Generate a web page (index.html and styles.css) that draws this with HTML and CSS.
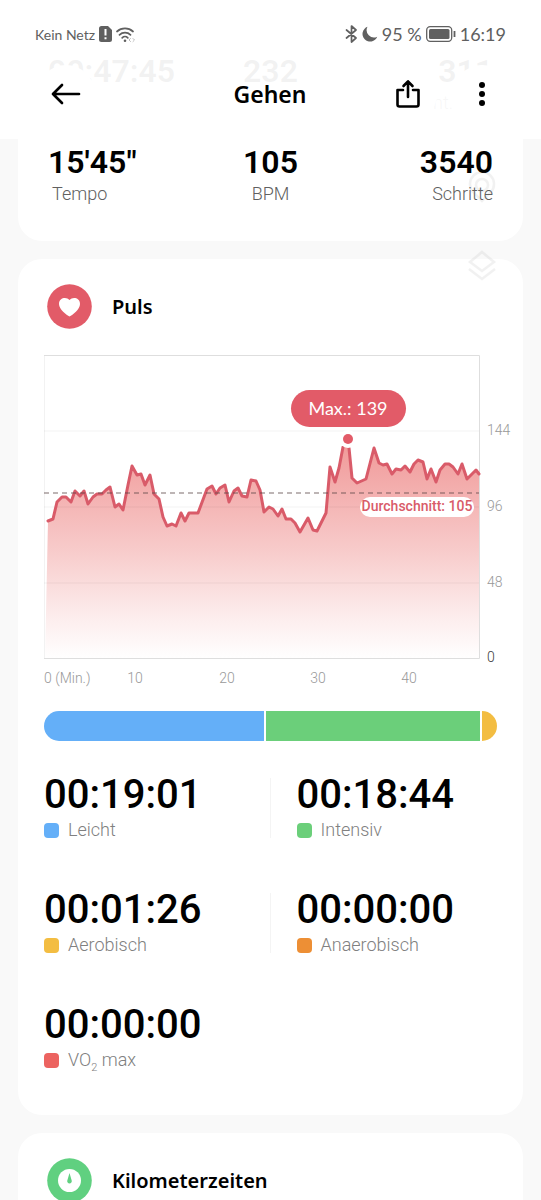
FILE: index.html
```html
<!DOCTYPE html>
<html lang="de">
<head>
<meta charset="utf-8">
<meta name="viewport" content="width=device-width, initial-scale=1">
<title>Gehen</title>
<link rel="stylesheet" href="styles.css">
</head>
<body>
<header class="top">
  <div class="status">
    <div class="status-side status-net">
      <span>Kein Netz</span>
      <svg width="13" height="16" viewBox="0 0 13 16"><path d="M2.500 0H9l4 4v9.500a2.500 2.500 0 0 1-2.500 2.500h-8A2.500 2.500 0 0 1 0 13.500v-11A2.500 2.500 0 0 1 2.500 0z" fill="#606060"/><path d="M6.500 3v6.500M6.500 11.300v2" stroke="#fff" stroke-width="2"/></svg>
      <svg width="20" height="17" viewBox="0 0 20 17" fill="none" stroke="#606060" stroke-width="1.700" stroke-linecap="round"><path d="M1 5.500a12 12 0 0 1 16 0M3.500 8.800a8 8 0 0 1 11 0M6.200 11.800a4 4 0 0 1 5.600 0"/><circle cx="9" cy="14.800" r="1.300" fill="#606060" stroke="none"/><path d="M14.500 12.500l-1.500 1.500 1.500 1.500M17 12.500l1.500 1.500-1.500 1.500" stroke="#bbb" stroke-width="1"/></svg>
    </div>
    <div class="status-side">
      <svg width="13" height="18" viewBox="0 0 13 18" fill="none" stroke="#606060" stroke-width="1.700" stroke-linejoin="round" stroke-linecap="round"><path d="M1.500 5l9.500 8-4.500 4V1L11 5l-9.500 8"/></svg>
      <svg width="16" height="16" viewBox="0 0 16 16"><path d="M5.500.8A7.600 7.600 0 1 0 15.200 10.700 7.300 7.300 0 0 1 5.500.8z" fill="#606060"/></svg>
      <span>95 %</span>
      <svg width="30" height="16" viewBox="0 0 30 16"><rect x=".7" y=".7" width="25" height="14.600" rx="3.500" fill="none" stroke="#606060" stroke-width="1.300"/><rect x="3" y="3" width="20.500" height="10" rx="1.500" fill="#606060"/><path d="M28.500 5v6" stroke="#606060" stroke-width="1.800"/></svg>
      <time>16:19</time>
    </div>
  </div>
  <nav class="bar">
    <button class="round" type="button" aria-label="Zurück"><svg width="32" height="24" viewBox="0 0 32 24" fill="none" stroke="#000" stroke-width="2.700" stroke-linecap="round" stroke-linejoin="round"><path d="M29 12H3M12 3l-9 9 9 9"/></svg></button>
    <h1 class="title">Gehen</h1>
    <button class="round share" type="button" aria-label="Teilen"><svg width="26" height="30" viewBox="0 0 26 30" fill="none" stroke="#000" stroke-width="2.600" stroke-linejoin="round" stroke-linecap="round"><path d="M8 11H2.500v14.500a2 2 0 0 0 2 2h17a2 2 0 0 0 2-2V11H18M13 18V2.500M8.500 7L13 2.300 17.500 7"/></svg></button>
    <button class="round" type="button" aria-label="Mehr"><svg width="8" height="26" viewBox="0 0 8 26"><circle cx="4" cy="4" r="3"/><circle cx="4" cy="13" r="3"/><circle cx="4" cy="22" r="3"/></svg></button>
  </nav>
</header>
<div class="map-tools" aria-hidden="true">
  <svg width="32" height="32" viewBox="0 0 32 32" fill="none" stroke="#808080" stroke-width="2.500"><path d="M7 20a12 12 0 1 1 18 0l-9 9z"/><circle cx="16" cy="13" r="6"/></svg>
  <svg width="32" height="32" viewBox="0 0 32 32" fill="none" stroke="#808080" stroke-width="2.500"><path d="M16 2l12 10-12 9-12-9zM3 19l13 10 13-10"/></svg>
</div>
<main class="page">
  <section class="card summary">
    <dl class="stats scrolled">
      <div class="stat"><dd>00:47:45</dd></div>
      <div class="stat"><dd>232</dd></div>
      <div class="stat"><dd>311</dd><dt>nt.</dt></div>
    </dl>
    <dl class="stats">
      <div class="stat"><dd>15'45"</dd><dt>Tempo</dt></div>
      <div class="stat"><dd>105</dd><dt>BPM</dt></div>
      <div class="stat"><dd>3540</dd><dt>Schritte</dt></div>
    </dl>
  </section>

  <section class="card">
    <div class="head">
      <svg width="45" height="45" viewBox="0 0 45 45"><circle cx="22.500" cy="22.500" r="22.300" fill="#e25b68"/><path d="M22.500 32.500c-3-1.500-10.500-7-10.500-12.500 0-6.500 7.500-7.500 10.500-4 3-3.500 10.500-2.500 10.500 4 0 5.500-7.500 11-10.500 12.500z" fill="#fff"/></svg>
      <h2>Puls</h2>
    </div>
    <svg class="chart" viewBox="44 354 469 336" role="img" aria-label="Pulsverlauf">
      <defs><linearGradient id="fade" x1="0" y1="440" x2="0" y2="659" gradientUnits="userSpaceOnUse"><stop offset="0" stop-color="#e8605f" stop-opacity=".65"/><stop offset=".5" stop-color="#e8605f" stop-opacity=".33"/><stop offset=".8" stop-color="#e8605f" stop-opacity=".12"/><stop offset="1" stop-color="#e8605f" stop-opacity="0"/></linearGradient></defs>
      <path class="area" fill="url(#fade)" d="M48 521L53 519 57 502 62 497 66 497 71 502 75 491 80 496 84 491 88 504 93 497 97 494 102 494 106 490 110 487 115 507 119 504 123 510 128 485 132 466 137 475 141 474 145 485 150 475 154 494 159 499 163 517 167 526 172 524 176 526 181 513 185 521 189 513 198 513 207 489 212 486 216 494 220 488 225 485 229 502 234 491 238 488 242 496 247 497 251 480 256 481 260 490 264 512 269 507 273 509 278 516 282 509 286 519 291 519 295 523 300 532 308 518 313 530 317 531 326 513 330 467 335 482 339 468 343 447 349 447 352 478 357 483 366 479 374 448 379 463 383 465 387 464 392 474 396 469 401 470 405 466 410 472 414 464 418 460 423 462 427 479 431 469 436 482 440 470 445 464 449 464 453 467 458 474 462 464 467 479 471 475 476 470 479 474V659H45z"/>
      <path class="grid" d="M44 431H479M44 507H479M44 583H479M44.500 355V659"/>
      <path class="frame" d="M44 355.500H479.500V658.500H44"/>
      <path class="line" d="M48 521L53 519 57 502 62 497 66 497 71 502 75 491 80 496 84 491 88 504 93 497 97 494 102 494 106 490 110 487 115 507 119 504 123 510 128 485 132 466 137 475 141 474 145 485 150 475 154 494 159 499 163 517 167 526 172 524 176 526 181 513 185 521 189 513 198 513 207 489 212 486 216 494 220 488 225 485 229 502 234 491 238 488 242 496 247 497 251 480 256 481 260 490 264 512 269 507 273 509 278 516 282 509 286 519 291 519 295 523 300 532 308 518 313 530 317 531 326 513 330 467 335 482 339 468 343 447M349 448L352 478 357 483 366 479 374 448 379 463 383 465 387 464 392 474 396 469 401 470 405 466 410 472 414 464 418 460 423 462 427 479 431 469 436 482 440 470 445 464 449 464 453 467 458 474 462 464 467 479 471 475 476 470 479 474"/>
      <path class="average" d="M44 493H479"/>
      <circle cx="348" cy="439" r="9" fill="#fff"/>
      <circle cx="348" cy="439" r="5" fill="#e25b68"/>
      <rect x="291" y="390" width="115" height="37" rx="18.500" fill="#e25b68"/>
      <text class="max" x="348" y="415">Max.: 139</text>
      <rect x="360" y="497" width="114" height="20" rx="10" fill="#fff"/>
      <text class="avg-label" x="417" y="511">Durchschnitt: 105</text>
      <g class="axis">
        <text x="487" y="435">144</text><text x="487" y="511">96</text><text x="487" y="587">48</text><text class="zero" x="487" y="662">0</text>
        <text x="44" y="683">0 (Min.)</text>
        <g class="ticks"><text x="135" y="683">10</text><text x="227" y="683">20</text><text x="318" y="683">30</text><text x="409" y="683">40</text></g>
      </g>
    </svg>
    <div class="zones-bar"><i class="blue"></i><i class="green"></i><i class="yellow"></i></div>
    <dl class="zones">
      <div class="zone split"><dd>00:19:01</dd><dt><i class="blue"></i>Leicht</dt></div>
      <div class="zone"><dd>00:18:44</dd><dt><i class="green"></i>Intensiv</dt></div>
      <div class="zone split"><dd>00:01:26</dd><dt><i class="yellow"></i>Aerobisch</dt></div>
      <div class="zone"><dd>00:00:00</dd><dt><i class="orange"></i>Anaerobisch</dt></div>
      <div class="zone"><dd>00:00:00</dd><dt><i class="red"></i><span>VO<sub>2</sub> max</span></dt></div>
    </dl>
  </section>

  <section class="card">
    <div class="head">
      <svg width="45" height="45" viewBox="0 0 45 45"><circle cx="22.500" cy="22.500" r="22.300" fill="#60d080"/><circle cx="22.500" cy="22.500" r="11.500" fill="#fff"/><path d="M22.500 15l2.200 7.500a2.300 2.300 0 1 1-4.400 0z" fill="#60d080"/></svg>
      <h2>Kilometerzeiten</h2>
    </div>
  </section>
</main>
</body>
</html>
```
FILE: styles.css
```css
* { box-sizing: border-box; }
body {
  margin: 0;
  background: #f9f9f9;
  color: #000;
  font-family: Roboto, "Noto Sans", sans-serif;
  height: 100vh;
  overflow: hidden;
  position: relative;
}
h1, h2, dl, dd, dt { margin: 0; }

.top {
  position: absolute;
  inset: 0 0 auto;
  z-index: 2;
  height: 139px;
  padding-top: 23px;
  background: rgba(255, 255, 255, .95);
}
.status {
  display: flex;
  justify-content: space-between;
  padding: 0 35px;
  height: 22px;
  color: #606060;
  font-family: Lato, sans-serif;
  font-size: 18px;
}
.status-side { display: flex; align-items: center; gap: 4px; }
.status-net { font-size: 14px; }
.bar {
  display: flex;
  align-items: center;
  padding: 20px 30px 0 37px;
}
.round {
  display: grid;
  place-items: center;
  width: 58px;
  height: 58px;
  padding: 0;
  border: 0;
  border-radius: 50%;
  background: #fff;
}
.title {
  flex: 1;
  padding-left: 66px;
  text-align: center;
  font: 600 23px/32px "Noto Sans", sans-serif;
}
.share { margin-right: 16px; }

.map-tools {
  position: absolute;
  top: 172px;
  right: 43px;
  z-index: 1;
  display: grid;
  gap: 46px;
  opacity: .1;
}

.page { display: grid; gap: 18px; padding: 0 18px; }
.card { background: #fff; border-radius: 24px; }
.summary { padding: 50px 30px 34px; border-radius: 0 0 24px 24px; }
.stats { display: grid; grid-template-columns: 1fr 1fr 1fr; height: 66px; }
.scrolled { height: 91px; }
.stat { text-align: center; }
.stat:first-child { text-align: left; }
.stat:last-child { text-align: right; }
.stat:first-child dt { padding-left: 4px; }
.scrolled .stat:last-child dt { padding-right: 40px; }
.stat dd { font-size: 32px; font-weight: 600; line-height: 42px; }
.stat dt { color: #606060; font-size: 18px; font-weight: 300; line-height: 22px; }

.head {
  display: flex;
  align-items: center;
  gap: 20px;
  padding: 25px 29px;
}
.head h2 { font: 600 20px/28px "Noto Sans", sans-serif; }

.chart {
  display: block;
  width: 100%;
  padding: 0 10px 0 26px;
}
.grid { fill: none; stroke: rgba(0, 0, 0, .05); }
.frame { fill: none; stroke: #dedede; }
.line { fill: none; stroke: #d95b69; stroke-width: 3; stroke-linecap: round; stroke-linejoin: round; }
.average { stroke: rgba(90, 70, 70, .4); stroke-width: 2; stroke-dasharray: 5 4; }
.max { fill: #fff; font-family: Lato, sans-serif; font-size: 18px; text-anchor: middle; }
.avg-label { fill: #d95b69; font-size: 14px; font-weight: 500; text-anchor: middle; }
.axis { fill: #999; font-size: 14px; font-weight: 300; }
.axis .zero { fill: #404040; }
.ticks { text-anchor: middle; }

.zones-bar {
  display: grid;
  grid-template-columns: 1141fr 1110fr 80fr;
  gap: 2px;
  height: 30px;
  margin: 21px 26px 0;
  border-radius: 15px;
  overflow: hidden;
}
.blue { background: #64aff8; }
.green { background: #6bcf7a; }
.yellow { background: #f3bd42; }
.orange { background: #ed8f35; }
.red { background: #ec6360; }

.zones {
  display: grid;
  grid-template-columns: 1fr 1fr;
  row-gap: 41px;
  padding: 32px 26px 42px;
}
.zone { height: 74px; padding-left: 26px; }
.zone:nth-child(odd) { padding-left: 0; }
.zone:last-child { height: 70px; }
.split {
  background: linear-gradient(#f4f4f4, #f4f4f4) right 5px / 1px 60px no-repeat;
}
.zone dd { font-size: 40px; font-weight: 500; line-height: 44px; }
.zone dt {
  display: flex;
  align-items: center;
  gap: 9px;
  color: #808080;
  font-size: 18px;
  font-weight: 300;
  line-height: 26px;
}
.zone i { width: 15px; height: 15px; border-radius: 4px; }
.zone sub { font-size: 11px; line-height: 0; }
```
